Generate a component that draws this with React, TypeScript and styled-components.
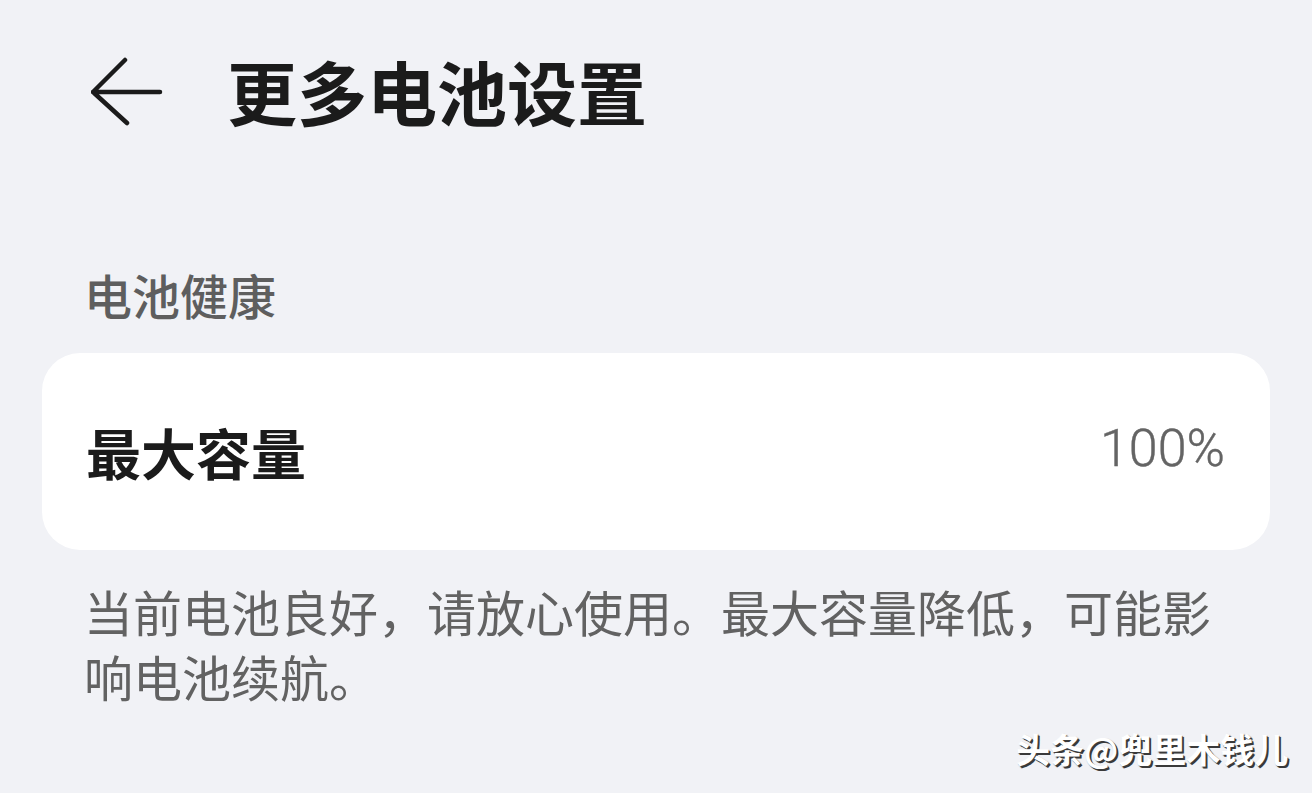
import React from "react";
import styled, { createGlobalStyle } from "styled-components";

const GlobalStyle = createGlobalStyle`
  html, body {
    margin: 0;
    padding: 0;
    background: #f1f2f6;
  }
  body {
    font-family: "Noto Sans CJK SC", "Noto Sans", sans-serif;
  }
`;

const Page = styled.div`
  position: relative;
  width: 1312px;
  height: 793px;
  padding: 0 42px;
  box-sizing: border-box;
  overflow: hidden;
  background: #f1f2f6;
`;

const Header = styled.header`
  display: flex;
  align-items: center;
  height: 182px;
  padding-left: 49px;
`;

const BackButton = styled.button`
  display: flex;
  align-items: center;
  justify-content: center;
  width: 72px;
  height: 70px;
  margin: 0 64px 0 0;
  padding: 0;
  border: none;
  background: none;
  color: #1b1b1b;
  position: relative;
  top: 1px;
`;

const Title = styled.h1`
  margin: 0;
  font-size: 70px;
  line-height: 1;
  font-weight: 700;
  color: #1b1b1b;
`;

const SectionLabel = styled.div`
  margin: 88px 0 35px;
  padding-left: 42px;
  font-size: 48px;
  line-height: 48px;
  font-weight: 500;
  color: #5e5e5e;
`;

const Card = styled.div`
  display: flex;
  align-items: center;
  justify-content: space-between;
  height: 197px;
  padding: 0 45px 0 44px;
  background: #ffffff;
  border-radius: 38px;
`;

const ItemLabel = styled.span`
  font-size: 55px;
  font-weight: 600;
  color: #1b1b1b;
  line-height: 1;
`;

const ItemValue = styled.span`
  font-family: Roboto, "Noto Sans", sans-serif;
  font-size: 52px;
  font-weight: 300;
  color: #646464;
  line-height: 1;
  margin-top: -6px;
  -webkit-text-stroke: 0.4px #646464;
`;

const Note = styled.p`
  margin: 28px 0 0;
  padding: 0 48px 0 42px;
  font-size: 49px;
  line-height: 65px;
  color: #626262;
`;

const Watermark = styled.div`
  position: absolute;
  left: 1016px;
  top: 729px;
  font-size: 34px;
  font-weight: 700;
  line-height: 40px;
  color: #ffffff;
  text-shadow: 2px 2px 0 #3a3a3a, 1px 1px 1px #555;
`;

const BackArrow = () => (
  <svg width="72" height="70" viewBox="0 0 72 70" fill="none">
    <path
      d="M34 3 L2 35 L36 66 M2 35 H69"
      stroke="currentColor"
      strokeWidth="4.5"
      strokeLinecap="round"
      strokeLinejoin="round"
    />
  </svg>
);

const App: React.FC = () => {
  return (
    <>
      <GlobalStyle />
      <Page>
        <Header>
          <BackButton aria-label="返回">
            <BackArrow />
          </BackButton>
          <Title>更多电池设置</Title>
        </Header>

        <SectionLabel>电池健康</SectionLabel>

        <Card>
          <ItemLabel>最大容量</ItemLabel>
          <ItemValue>100%</ItemValue>
        </Card>

        <Note>当前电池良好，请放心使用。最大容量降低，可能影响电池续航。</Note>

        <Watermark>头条@兜里木钱儿</Watermark>
      </Page>
    </>
  );
};

export default App;
